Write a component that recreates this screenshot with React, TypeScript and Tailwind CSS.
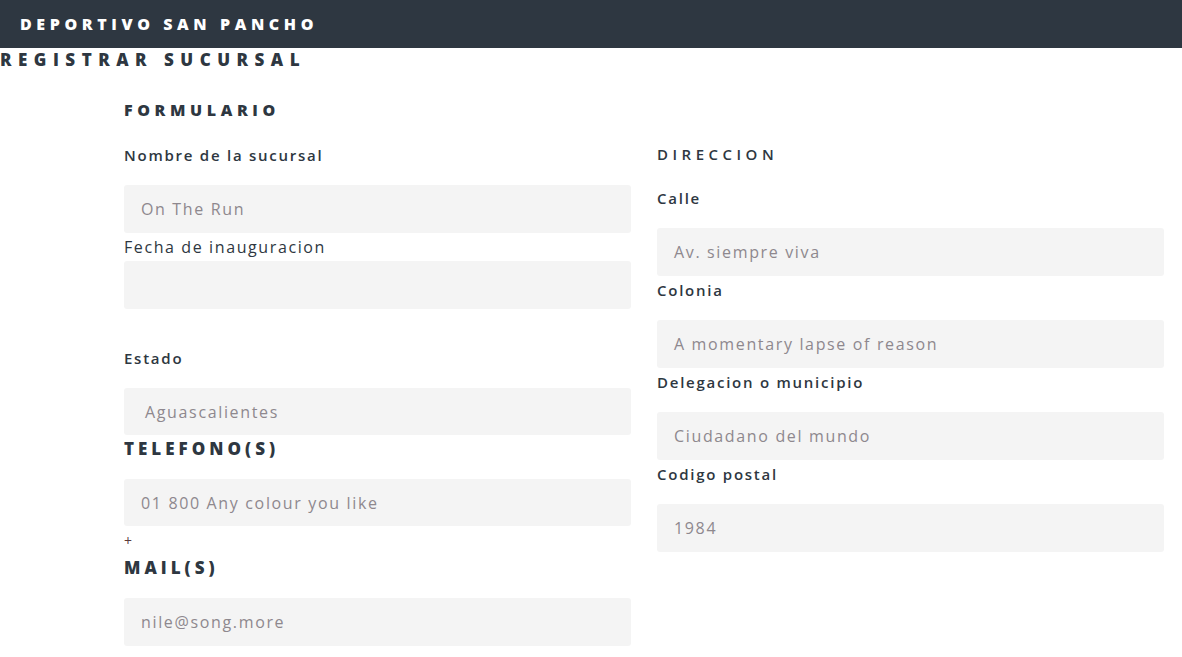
const label = "block h-5 leading-5 text-[15px] font-semibold tracking-[1.75px] text-[#2e3741]";
const input =
  "block w-full h-12 rounded-[3px] bg-[#f4f4f4] px-[17px] text-[16px] tracking-[1.65px] text-[#8e888e] outline-none";

function Field({ name, value, className = "" }: { name: string; value: string; className?: string }) {
  return (
    <div className={className}>
      <span className={label}>{name}</span>
      <div className={`${input} mt-5 flex items-center`}>{value}</div>
    </div>
  );
}

export default function App() {
  return (
    <div className="min-h-[657px] bg-white font-['Open_Sans',sans-serif] text-[#2e3741]">
      <header className="h-12 bg-[#2e3741] flex items-center px-5">
        <span className="text-white text-[16px] font-extrabold tracking-[4.6px]">DEPORTIVO SAN PANCHO</span>
      </header>
      <h1 className="h-6 leading-6 text-[17px] font-extrabold tracking-[6.5px]">REGISTRAR SUCURSAL</h1>

      <div className="grid grid-cols-2 gap-[26px] pl-[124px] pr-[18px] pt-[28px]">
        {/* Formulario */}
        <div>
          <h2 className="h-5 leading-5 text-[16px] font-extrabold tracking-[4.6px]">FORMULARIO</h2>
          <Field name="Nombre de la sucursal" value="On The Run" className="mt-[25px]" />
          <div className="mt-1">
            <span className="block h-5 leading-5 text-[16px] tracking-[1.6px]">Fecha de inauguracion</span>
            <div className={`${input} mt-1`}></div>
          </div>
          <div className="mt-[39px]">
            <span className={label}>Estado</span>
            <div className={`${input} !h-[47px] mt-5 flex items-center pl-[21px] text-[#3c3c3c]`}>Aguascalientes</div>
          </div>
          <div className="mt-1">
            <h3 className="h-5 leading-5 text-[17px] font-extrabold tracking-[4px]">TELEFONO(S)</h3>
            <div className={`${input} !h-[47px] mt-5 flex items-center`}>01 800 Any colour you like</div>
          </div>
          <div className="mt-[7px] h-4 leading-4 text-[14px] text-[#5a3a3a]">+</div>
          <h3 className="mt-[9px] h-5 leading-5 text-[17px] font-extrabold tracking-[4px]">MAIL(S)</h3>
          <div className={`${input} mt-5 flex items-center`}>nile@song.more</div>
        </div>

        {/* Direccion */}
        <div>
          <h2 className="mt-[44px] h-5 leading-5 text-[15px] font-semibold tracking-[4.5px]">DIRECCION</h2>
          <Field name="Calle" value="Av. siempre viva" className="mt-6" />
          <Field name="Colonia" value="A momentary lapse of reason" className="mt-1" />
          <Field name="Delegacion o municipio" value="Ciudadano del mundo" className="mt-1" />
          <Field name="Codigo postal" value="1984" className="mt-1" />
        </div>
      </div>
    </div>
  );
}
